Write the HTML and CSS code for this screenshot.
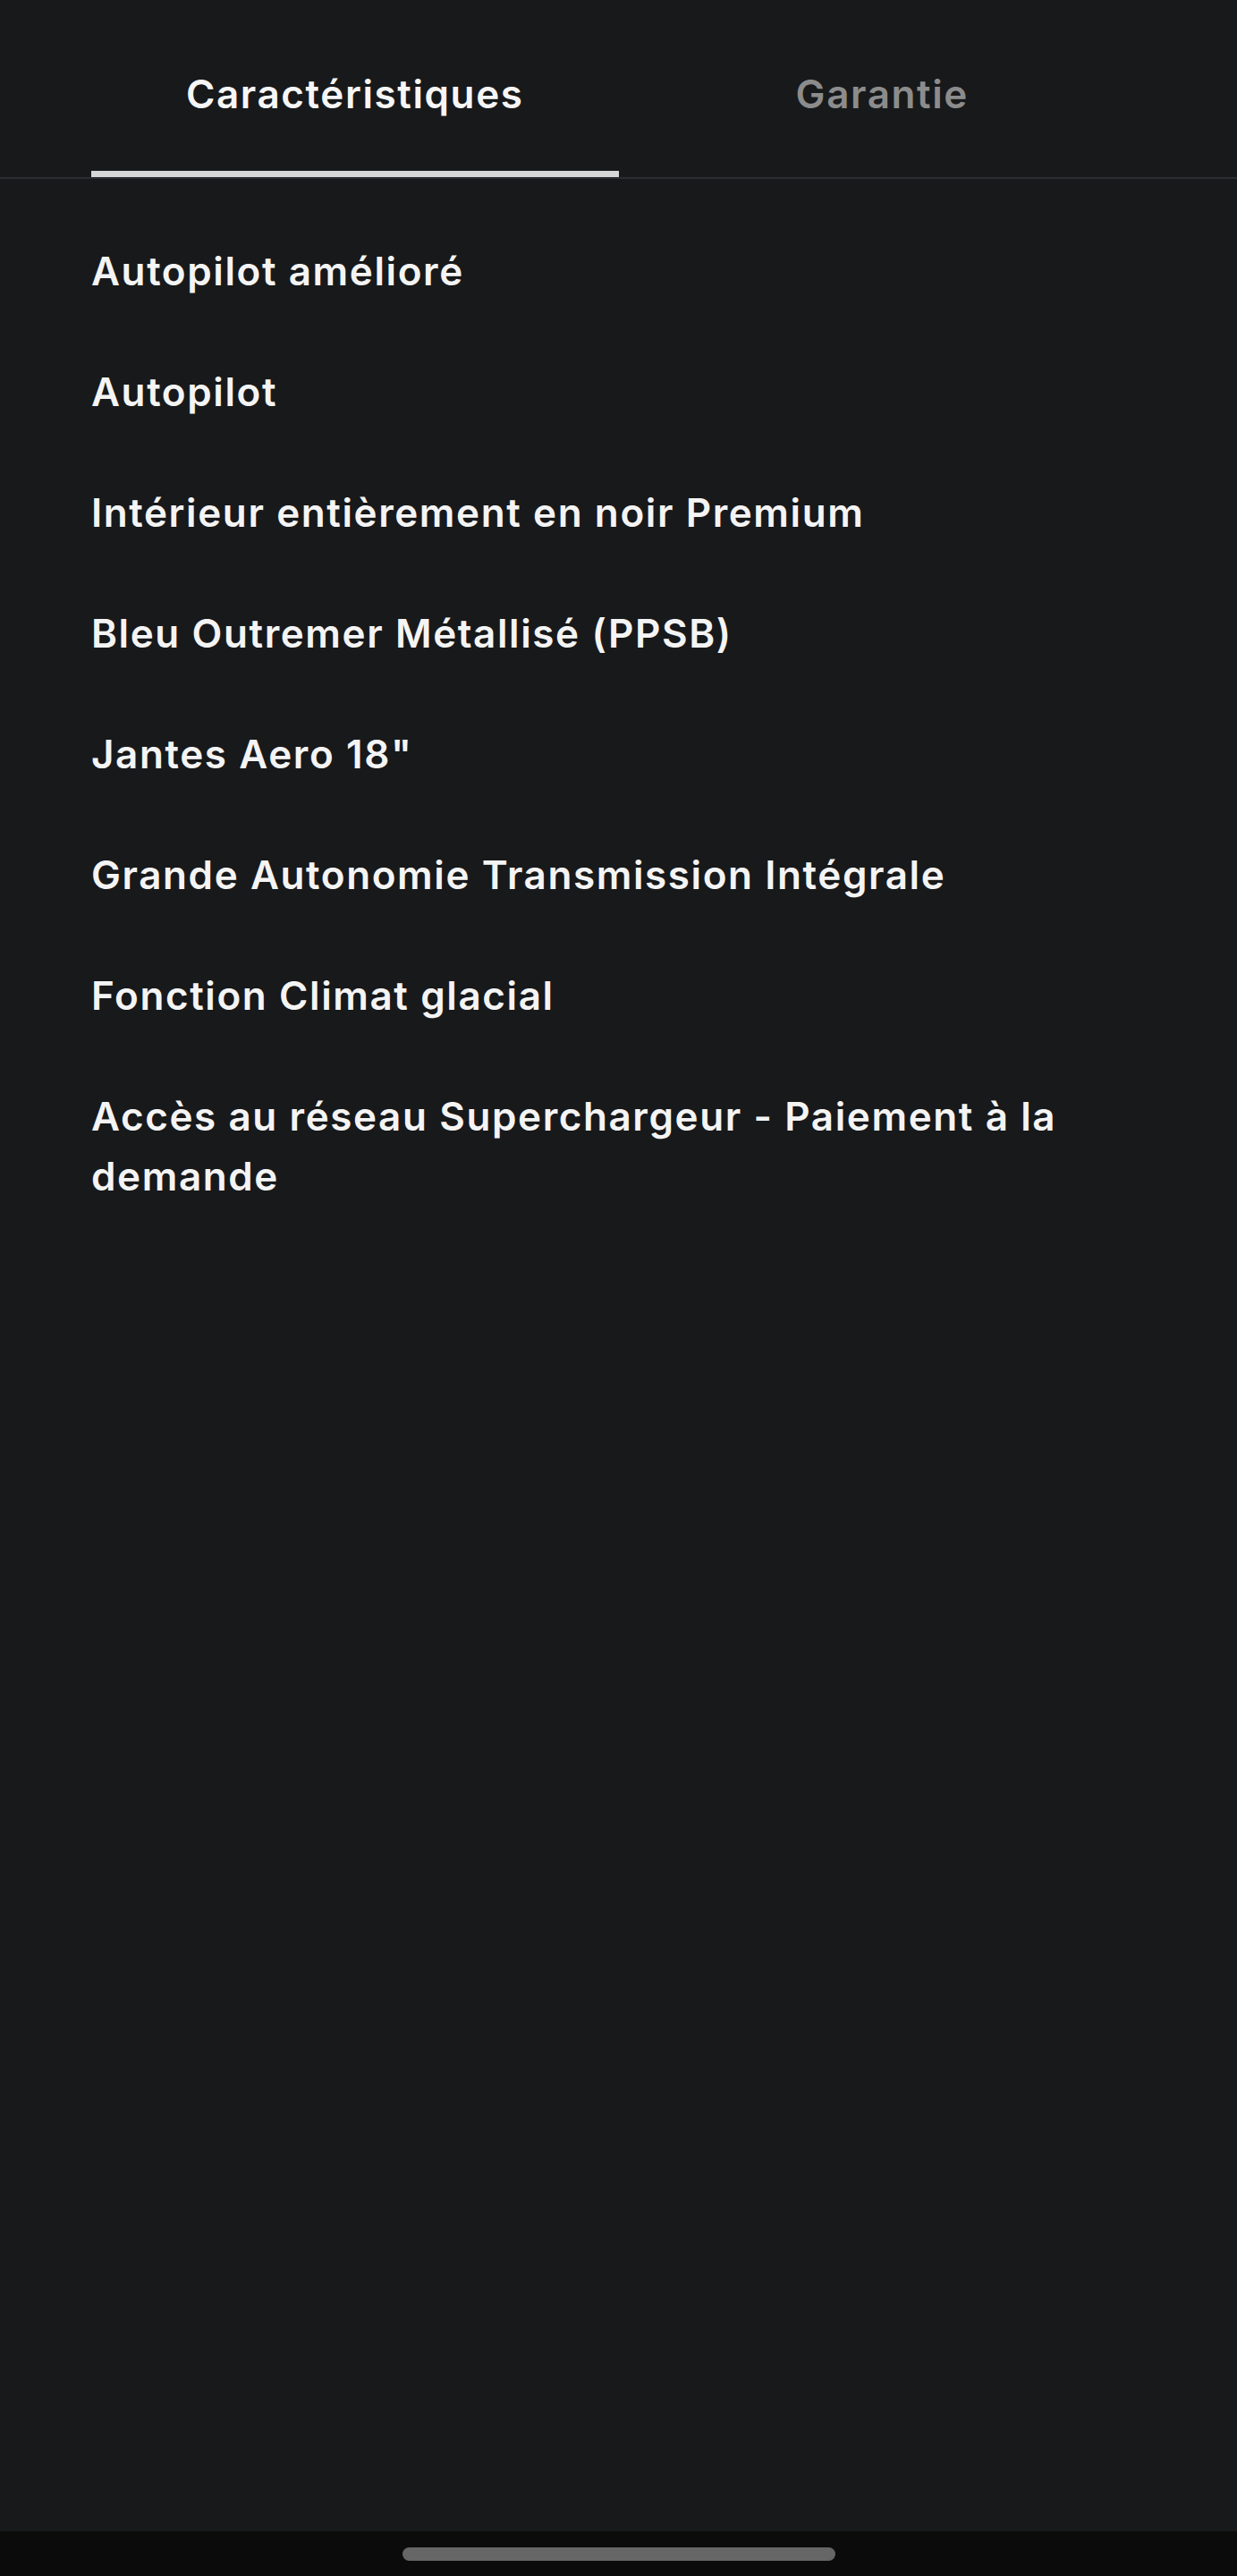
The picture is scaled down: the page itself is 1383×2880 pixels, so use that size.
FILE: index.html
```html
<!DOCTYPE html>
<html lang="fr">
<head>
    <meta charset="UTF-8">
    <meta name="viewport" content="width=device-width, initial-scale=1.0">
    <title>Caractéristiques</title>
    <link rel="stylesheet" href="styles.css">
</head>
<body>
    <div class="screen">
        <header class="tabs">
            <nav class="tabs-inner">
                <button class="tab active">Caractéristiques</button>
                <button class="tab">Garantie</button>
            </nav>
        </header>

        <main class="content">
            <ul class="feature-list">
                <li>Autopilot amélioré</li>
                <li>Autopilot</li>
                <li>Intérieur entièrement en noir Premium</li>
                <li>Bleu Outremer Métallisé (PPSB)</li>
                <li>Jantes Aero 18"</li>
                <li>Grande Autonomie Transmission Intégrale</li>
                <li>Fonction Climat glacial</li>
                <li>Accès au réseau Superchargeur - Paiement à la demande</li>
            </ul>
        </main>

        <footer class="nav-bar">
            <div class="home-pill"></div>
        </footer>
    </div>
</body>
</html>
```

FILE: styles.css
```css
/* General */
body {
  margin: 0;
  padding: 0;
  background-color: #18191b;
  color: #f4f4f4;
  font-family: 'Inter', 'Noto Sans', sans-serif;
  font-weight: 600;
}

.screen {
  display: flex;
  flex-direction: column;
  min-height: 100vh;
}

/* Tabs */
.tabs {
  border-bottom: 2px solid #2c2d30;
}

.tabs-inner {
  display: flex;
  margin: 0 102px;
}

.tab {
  flex: 1;
  box-sizing: border-box;
  height: 198px;
  padding: 72px 0 52px;
  background: none;
  border: none;
  border-bottom: 7px solid transparent;
  font-family: inherit;
  font-weight: 600;
  font-size: 44px;
  line-height: 67px;
  letter-spacing: 1.6px;
  color: #8c8c8c;
  text-align: center;
  cursor: pointer;
}

.tab.active {
  color: #f6f6f6;
  border-bottom-color: #d6d6d6;
}

/* Feature list */
.content {
  flex: 1;
}

.feature-list {
  list-style: none;
  margin: 0;
  padding: 36px 102px 0;
}

.feature-list li {
  padding: 34px 0;
  font-size: 44px;
  line-height: 67px;
  letter-spacing: 1.6px;
}

/* Android nav bar */
.nav-bar {
  height: 50px;
  background-color: #0b0b0b;
  display: flex;
  justify-content: center;
  padding-top: 18px;
  box-sizing: border-box;
}

.home-pill {
  width: 484px;
  height: 15px;
  border-radius: 8px;
  background-color: #666666;
}
```
